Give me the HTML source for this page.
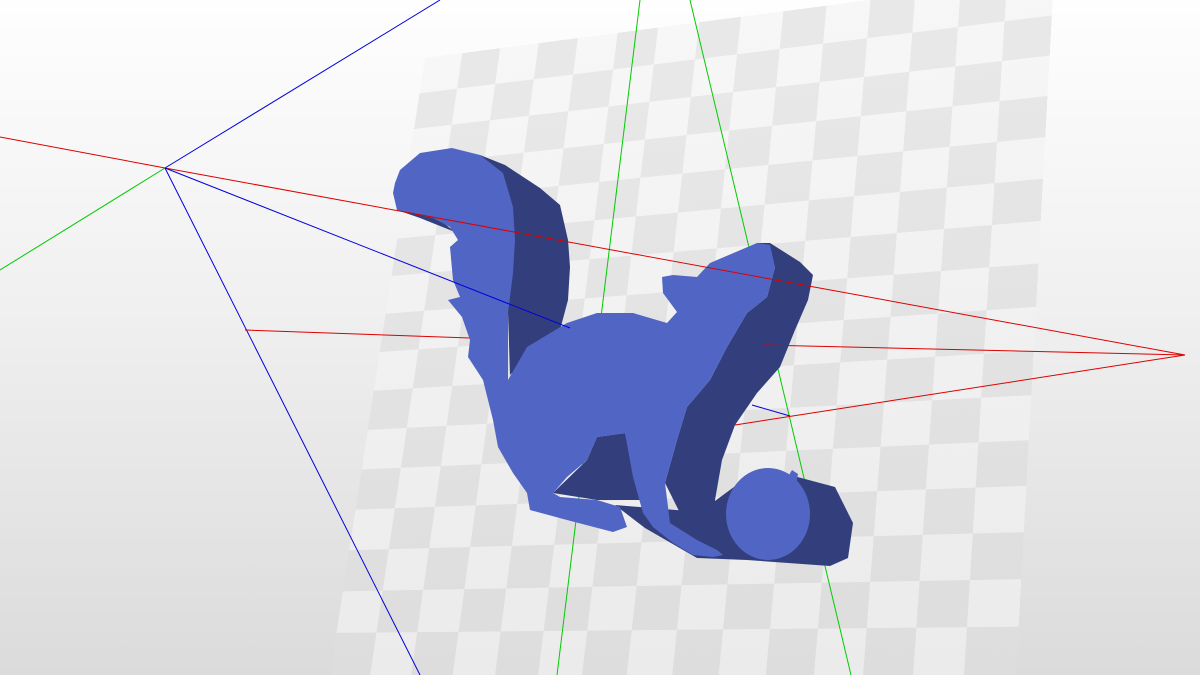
<!DOCTYPE html>
<html><head><meta charset="utf-8"><style>
html,body{margin:0;padding:0}
body{width:1200px;height:675px;overflow:hidden;position:relative;background:linear-gradient(180deg,#fefefe 0%,#f0f0f0 45%,#dbdbdb 100%)}
#plane{position:absolute;left:0;top:0;width:1500px;height:1600px;transform-origin:0 0;
transform:matrix3d(0.336907,-0.052787,0,-0.00007821, -0.07785,0.347831,0,-0.000055994, 0,0,1,0, 425,58,0,1);
background:repeating-conic-gradient(rgba(0,0,0,0.06) 0 25%,rgba(255,255,255,0) 0 50%) 0 0/200px 200px,linear-gradient(180deg,#f7f7f7,#ebebeb);}
svg{position:absolute;left:0;top:0}
</style></head><body>
<div id="plane"></div>
<svg width="1200" height="675" viewBox="0 0 1200 675">
<g stroke-width="1" fill="none">
<line x1="640" y1="0" x2="557" y2="675" stroke="#00cc00"/>
<line x1="690" y1="0" x2="851" y2="675" stroke="#00cc00"/>
<line x1="165" y1="168" x2="0" y2="270" stroke="#00cc00"/>
<line x1="440" y1="0" x2="165" y2="168" stroke="#0000e0"/>
<line x1="165" y1="168" x2="420" y2="675" stroke="#0000e0"/>
<line x1="245" y1="330" x2="470" y2="338" stroke="#dd0000"/>
<line x1="752" y1="405" x2="790" y2="416" stroke="#0000e0"/>
</g>
<g fill="#323f7c">
<polygon points="480,155 505,165 540,188 560,205 568,240 570,267 568,300 560,330 540,345 510,375 508,313"/>
<polygon points="397,210 420,212 440,220 455,232 445,228 420,218"/>
<polygon points="757,243 770,243 800,262 813,275 808,300 795,330 780,367 757,393 735,425 722,460 715,500 720,553 700,553 665,483 677,440 687,407 710,380 727,347 747,313 767,297 775,267"/>
<polygon points="553,493 587,460 597,437 625,433 640,500 597,500"/>
<polygon points="615,505 700,512 757,470 790,475 835,487 853,523 848,558 830,566 747,560 697,558 645,528"/>
</g>
<path fill="#5165c4" d="M395,183 L400,170 L420,153 L452,148 L480,155 L503,173 L513,207 L515,240 L513,273 L508,313 L508,380 L527,347 L567,323 L597,313 L633,313 L667,323 L677,312 L663,293 L662,277 L673,275 L697,277 L710,263 L757,243 L770,245 L775,267 L767,297 L747,313 L727,347 L710,380 L687,407 L677,440 L665,483 L670,523 L697,540 L717,550 L723,555 L713,557 L693,555 L673,543 L653,527 L643,513 L633,477 L625,433 L597,437 L587,460 L567,477 L553,493 L560,497 L597,500 L620,507 L627,527 L613,532 L567,520 L530,510 L527,493 L513,473 L498,447 L493,420 L483,380 L468,357 L470,340 L462,317 L448,300 L460,297 L453,280 L450,247 L458,240 L450,227 L433,218 L410,213 L397,210 L393,193 Z"/>
<ellipse cx="768" cy="514" rx="42" ry="46" fill="#5165c4"/>
<path fill="#5165c4" d="M785,482 L792,470 L798,474 L796,486 Z"/>
<g stroke-width="1" fill="none">
<line x1="0" y1="137" x2="165" y2="168" stroke="#dd0000"/>
<line x1="165" y1="168" x2="1185" y2="355" stroke="#dd0000"/>
<line x1="165" y1="168" x2="570" y2="328" stroke="#0000e0"/>
<line x1="763" y1="345" x2="1185" y2="355" stroke="#dd0000"/>
<line x1="735" y1="425" x2="1185" y2="355" stroke="#dd0000"/>
</g>
</svg>
</body></html>
